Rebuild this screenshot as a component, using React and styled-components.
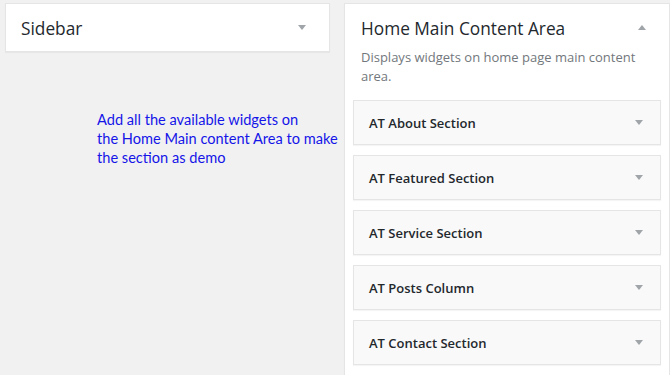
import React from 'react'
import styled, { createGlobalStyle } from 'styled-components'

const GlobalStyle = createGlobalStyle`
  body {
    margin: 0;
    background: #f1f1f1;
    font-family: "Open Sans", "Noto Sans", sans-serif;
    overflow: hidden;
  }
`

const Page = styled.div`
  display: flex;
  align-items: flex-start;
  gap: 14px;
  padding: 3px 0 0 5px;
  height: 372px;
`

const LeftColumn = styled.div`
  width: 325px;
  flex: none;
`

const RightColumn = styled.div`
  width: 326px;
  flex: none;
`

const Box = styled.div`
  background: #fff;
  border: 1px solid #e5e5e5;
  box-shadow: 0 1px 1px rgba(0, 0, 0, 0.04);
  box-sizing: border-box;
`

const SidebarBox = styled(Box)`
  height: 49px;
`

const MainBox = styled(Box)`
  min-height: 400px;
  padding-bottom: 20px;
`

const Header = styled.div`
  display: flex;
  justify-content: space-between;
  align-items: flex-start;
  padding: 13px 23px 0 ${(p) => p.$pad}px;
`

const Title = styled.h2`
  margin: 0;
  font-size: 17.3px;
  font-weight: 400;
  line-height: 23px;
  color: #23282d;
`

const Arrow = styled.span`
  width: 0;
  height: 0;
  margin-top: 8px;
  border-left: 4px solid transparent;
  border-right: 4px solid transparent;
  ${(p) =>
    p.$up
      ? 'border-bottom: 5px solid #a0a5aa;'
      : 'border-top: 5px solid #a0a5aa;'}
`

const Description = styled.p`
  margin: 8px 0 0 16px;
  padding-right: 20px;
  font-size: 13px;
  line-height: 19px;
  color: #72777c;
`

const WidgetList = styled.div`
  display: flex;
  flex-direction: column;
  gap: 10px;
  margin: 14px 8px 0 8px;
`

const Widget = styled.div`
  height: 45px;
  box-sizing: border-box;
  display: flex;
  align-items: center;
  justify-content: space-between;
  padding: 0 17px 0 15px;
  background: #f9f9f9;
  border: 1px solid #e5e5e5;
  box-shadow: 0 1px 1px rgba(0, 0, 0, 0.04);
`

const WidgetTitle = styled.span`
  font-size: 13px;
  font-weight: 600;
  color: #23282d;
`

const WidgetArrow = styled(Arrow)`
  margin-top: 0;
`

const Note = styled.p`
  margin: 58px 0 0 92px;
  white-space: nowrap;
  font-family: Lato, "Open Sans", sans-serif;
  font-size: 14.6px;
  line-height: 19px;
  color: #1515e8;
`

const widgets = [
  'AT About Section',
  'AT Featured Section',
  'AT Service Section',
  'AT Posts Column',
  'AT Contact Section'
]

export default function App() {
  return (
    <>
      <GlobalStyle />
      <Page>
        <LeftColumn>
          <SidebarBox>
            <Header $pad={15}>
              <Title>Sidebar</Title>
              <Arrow />
            </Header>
          </SidebarBox>
          <Note>
            Add all the available widgets on
            <br />
            the Home Main content Area to make
            <br />
            the section as demo
          </Note>
        </LeftColumn>
        <RightColumn>
          <MainBox>
            <Header $pad={16}>
              <Title>Home Main Content Area</Title>
              <Arrow $up />
            </Header>
            <Description>Displays widgets on home page main content area.</Description>
            <WidgetList>
              {widgets.map((w) => (
                <Widget key={w}>
                  <WidgetTitle>{w}</WidgetTitle>
                  <WidgetArrow />
                </Widget>
              ))}
            </WidgetList>
          </MainBox>
        </RightColumn>
      </Page>
    </>
  )
}
